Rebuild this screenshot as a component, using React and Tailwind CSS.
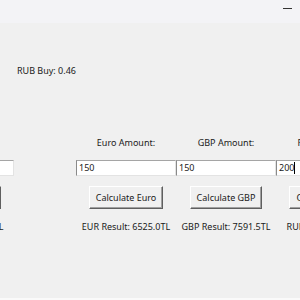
import React from "react";

const cols = [
  { label: "RUB Amount:", value: "200", btn: "Calculate RUB", result: "RUB Result: 92.0TL" },
  { label: "Euro Amount:", value: "150", btn: "Calculate Euro", result: "EUR Result: 6525.0TL" },
  { label: "GBP Amount:", value: "150", btn: "Calculate GBP", result: "GBP Result: 7591.5TL" },
  { label: "RUB Amount:", value: "200", btn: "Calculate RUB", result: "RUB Result: 92.0TL", caret: true },
];

const Column = ({ c }) => {
  return (
    <div className="w-[100px] shrink-0 flex flex-col items-center">
      <div className="h-4 leading-4 whitespace-nowrap">{c.label}</div>
      <div className="mt-[9px] w-[100px] h-4 bg-white border border-t-[#a5a5a5] border-l-[#8a8a8a] border-r-[#e3e3e3] border-b-[#e3e3e3] flex items-center pl-[2px] leading-4">
        {c.value}
        {c.caret && <span className="w-px h-[12px] bg-black" />}
      </div>
      <div className="mt-[10px] h-[23px] px-[6px] whitespace-nowrap flex items-center border border-t-white border-l-white border-r-[#5f5f5f] border-b-[#5f5f5f] bg-[#f0f0f0] shadow-[inset_-1px_-1px_0_#a0a0a0]">
        {c.btn}
      </div>
      <div className="mt-[10px] h-4 leading-4 whitespace-nowrap">{c.result}</div>
    </div>
  );
};

export default function App() {
  return (
    <div
      className="w-[300px] h-[300px] overflow-hidden bg-[#f0f0f0] text-[9px] text-[#1a1a1a] flex flex-col"
      style={{ fontFamily: '"Noto Sans", "Liberation Sans", sans-serif' }}
    >
      {/* title bar */}
      <div className="h-[23px] shrink-0 bg-[#f3f3f6] flex justify-end items-start pr-[8px] pt-[8px]">
        <div className="w-[9px] h-px bg-[#333]" />
      </div>

      <div className="mt-[40px] pl-[17px] h-4 leading-4">RUB Buy: 0.46</div>

      <div className="mt-[56px] flex ml-[-86px]">
        <Column c={cols[0]} />
        <div className="w-[62px] shrink-0" />
        <Column c={cols[1]} />
        <Column c={cols[2]} />
        <Column c={cols[3]} />
      </div>

      <div className="mt-auto h-[2px] bg-[#fafafa]" />
    </div>
  );
}
